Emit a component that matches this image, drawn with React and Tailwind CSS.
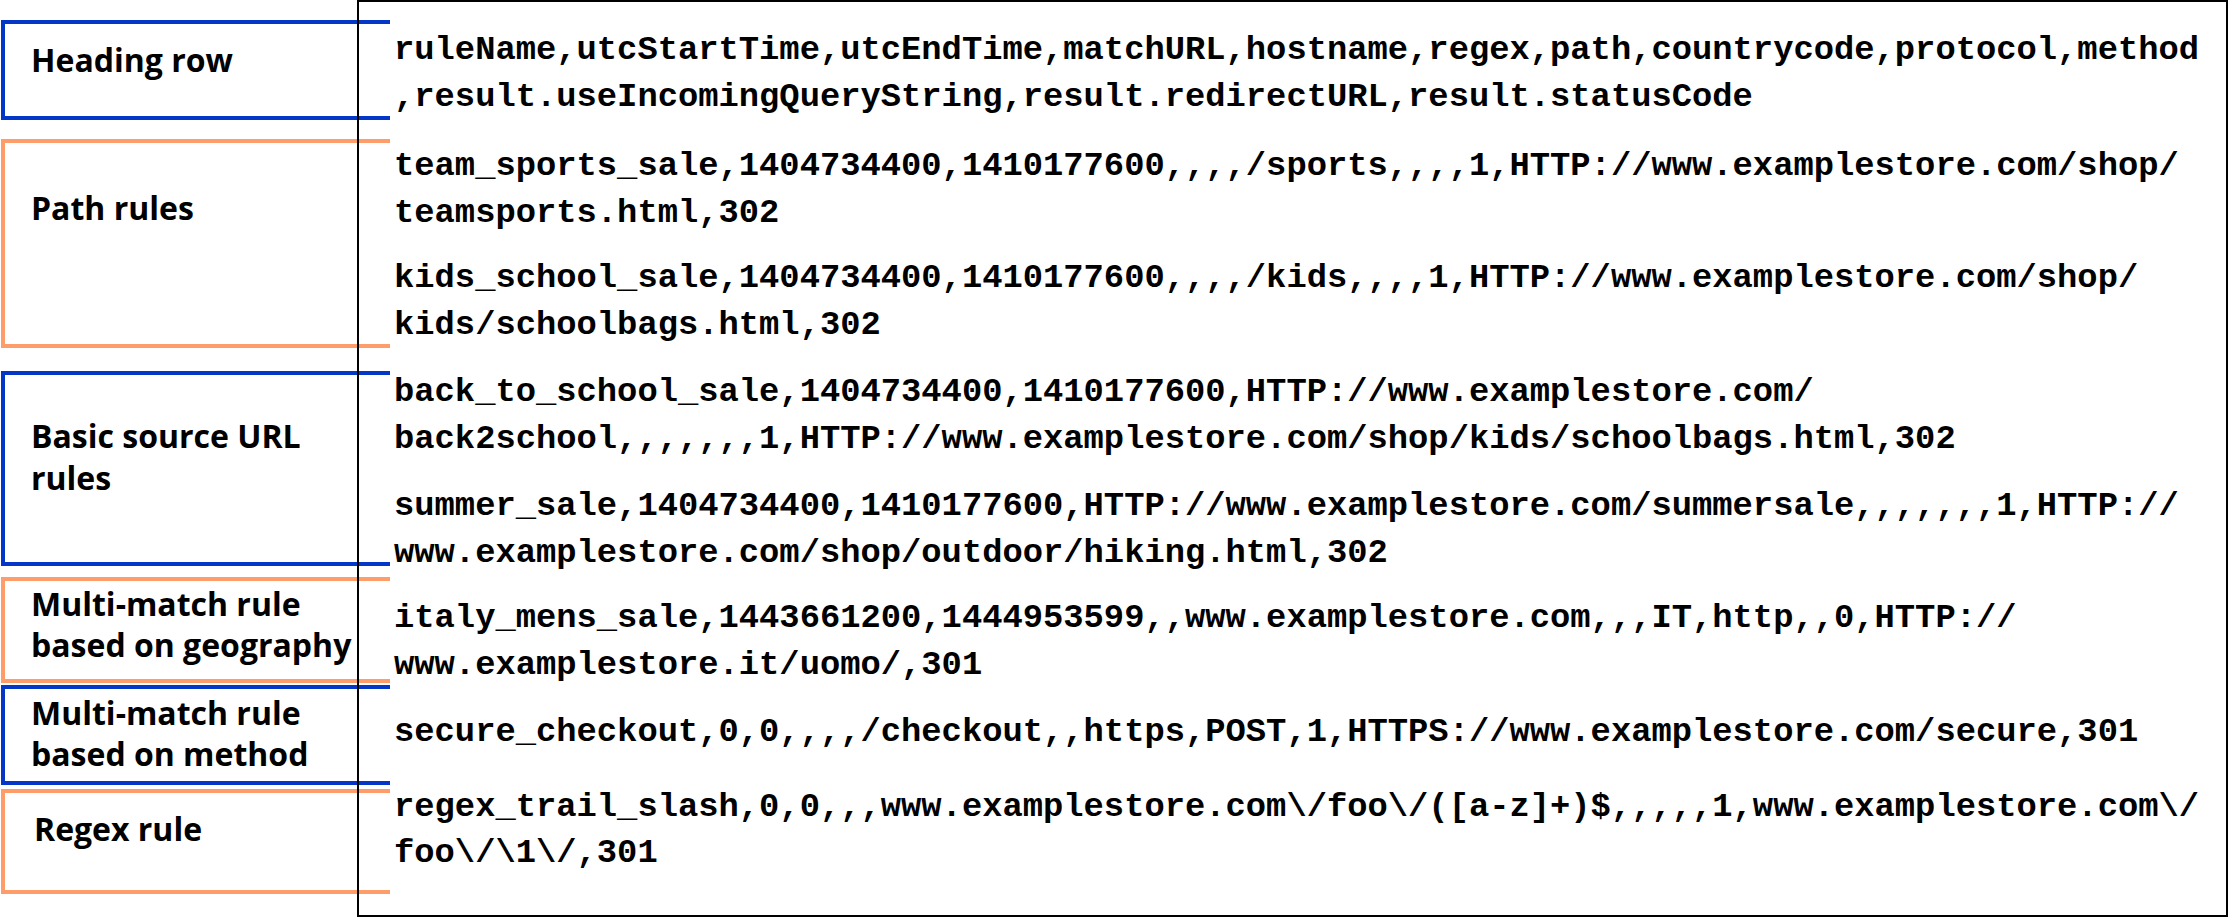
import React from "react";

const BLUE = "border-[#0437c8]";
const ORANGE = "border-[#ff9d6a]";

function LabelBox({ color, mt, h, pt, pl = "pl-[26px]", lh = "", lines }) {
  return (
    <div
      className={`${color} ${mt} ${h} ${pt} ${pl} ${lh} border-l-4 border-t-4 border-b-4 w-[389px] shrink-0`}
    >
      {lines.map((l, i) => (
        <div key={i} className="whitespace-pre">
          {l}
        </div>
      ))}
    </div>
  );
}

function Para({ mt, lines }) {
  return (
    <div className={mt}>
      {lines.map((l, i) => (
        <div key={i} className="whitespace-pre">
          {l}
        </div>
      ))}
    </div>
  );
}

export default function App() {
  return (
    <div className="w-[2232px] h-[918px] bg-white flex overflow-hidden">
      <div
        className="w-[390px] shrink-0 pl-[1px] flex flex-col text-black font-bold text-[32px] leading-[41px]"
        style={{ fontFamily: '"Open Sans", "Noto Sans", sans-serif' }}
      >
        <LabelBox color={BLUE} mt="mt-[20px]" h="h-[100px]" pt="pt-[15px]" lines={["Heading row"]} />
        <LabelBox color={ORANGE} mt="mt-[19px]" h="h-[209px]" pt="pt-[44px]" lines={["Path rules"]} />
        <LabelBox
          color={BLUE}
          mt="mt-[23px]"
          h="h-[195px]"
          pt="pt-[40px]"
          lh="leading-[42px]"
          lines={["Basic source URL", "rules"]}
        />
        <LabelBox
          color={ORANGE}
          mt="mt-[11px]"
          h="h-[106px]"
          pt="pt-[2px]"
          lines={["Multi-match rule", "based on geography"]}
        />
        <LabelBox
          color={BLUE}
          mt="mt-[2px]"
          h="h-[100px]"
          pt="pt-[3px]"
          lines={["Multi-match rule", "based on method"]}
        />
        <LabelBox
          color={ORANGE}
          mt="mt-[4px]"
          h="h-[105px]"
          pt="pt-[15px]"
          pl="pl-[29px]"
          lines={["Regex rule"]}
        />
      </div>
      <div
        className="-ml-[33px] w-[1871px] h-[917px] shrink-0 border-2 border-black pl-[35px] text-black font-bold text-[33.8px] leading-[46.5px]"
        style={{ fontFamily: '"Liberation Mono", "Courier New", monospace' }}
      >
        <Para
          mt="mt-[25px]"
          lines={[
            "ruleName,utcStartTime,utcEndTime,matchURL,hostname,regex,path,countrycode,protocol,method",
            ",result.useIncomingQueryString,result.redirectURL,result.statusCode",
          ]}
        />
        <Para
          mt="mt-[23px]"
          lines={[
            "team_sports_sale,1404734400,1410177600,,,,/sports,,,,1,HTTP://www.examplestore.com/shop/",
            "teamsports.html,302",
          ]}
        />
        <Para
          mt="mt-[19px]"
          lines={[
            "kids_school_sale,1404734400,1410177600,,,,/kids,,,,1,HTTP://www.examplestore.com/shop/",
            "kids/schoolbags.html,302",
          ]}
        />
        <Para
          mt="mt-[21px]"
          lines={[
            "back_to_school_sale,1404734400,1410177600,HTTP://www.examplestore.com/",
            "back2school,,,,,,,1,HTTP://www.examplestore.com/shop/kids/schoolbags.html,302",
          ]}
        />
        <Para
          mt="mt-[21px]"
          lines={[
            "summer_sale,1404734400,1410177600,HTTP://www.examplestore.com/summersale,,,,,,,1,HTTP://",
            "www.examplestore.com/shop/outdoor/hiking.html,302",
          ]}
        />
        <Para
          mt="mt-[19px]"
          lines={[
            "italy_mens_sale,1443661200,1444953599,,www.examplestore.com,,,IT,http,,0,HTTP://",
            "www.examplestore.it/uomo/,301",
          ]}
        />
        <Para
          mt="mt-[21px]"
          lines={["secure_checkout,0,0,,,,/checkout,,https,POST,1,HTTPS://www.examplestore.com/secure,301"]}
        />
        <Para
          mt="mt-[28px]"
          lines={[
            "regex_trail_slash,0,0,,,www.examplestore.com\\/foo\\/([a-z]+)$,,,,,1,www.examplestore.com\\/",
            "foo\\/\\1\\/,301",
          ]}
        />
      </div>
    </div>
  );
}
